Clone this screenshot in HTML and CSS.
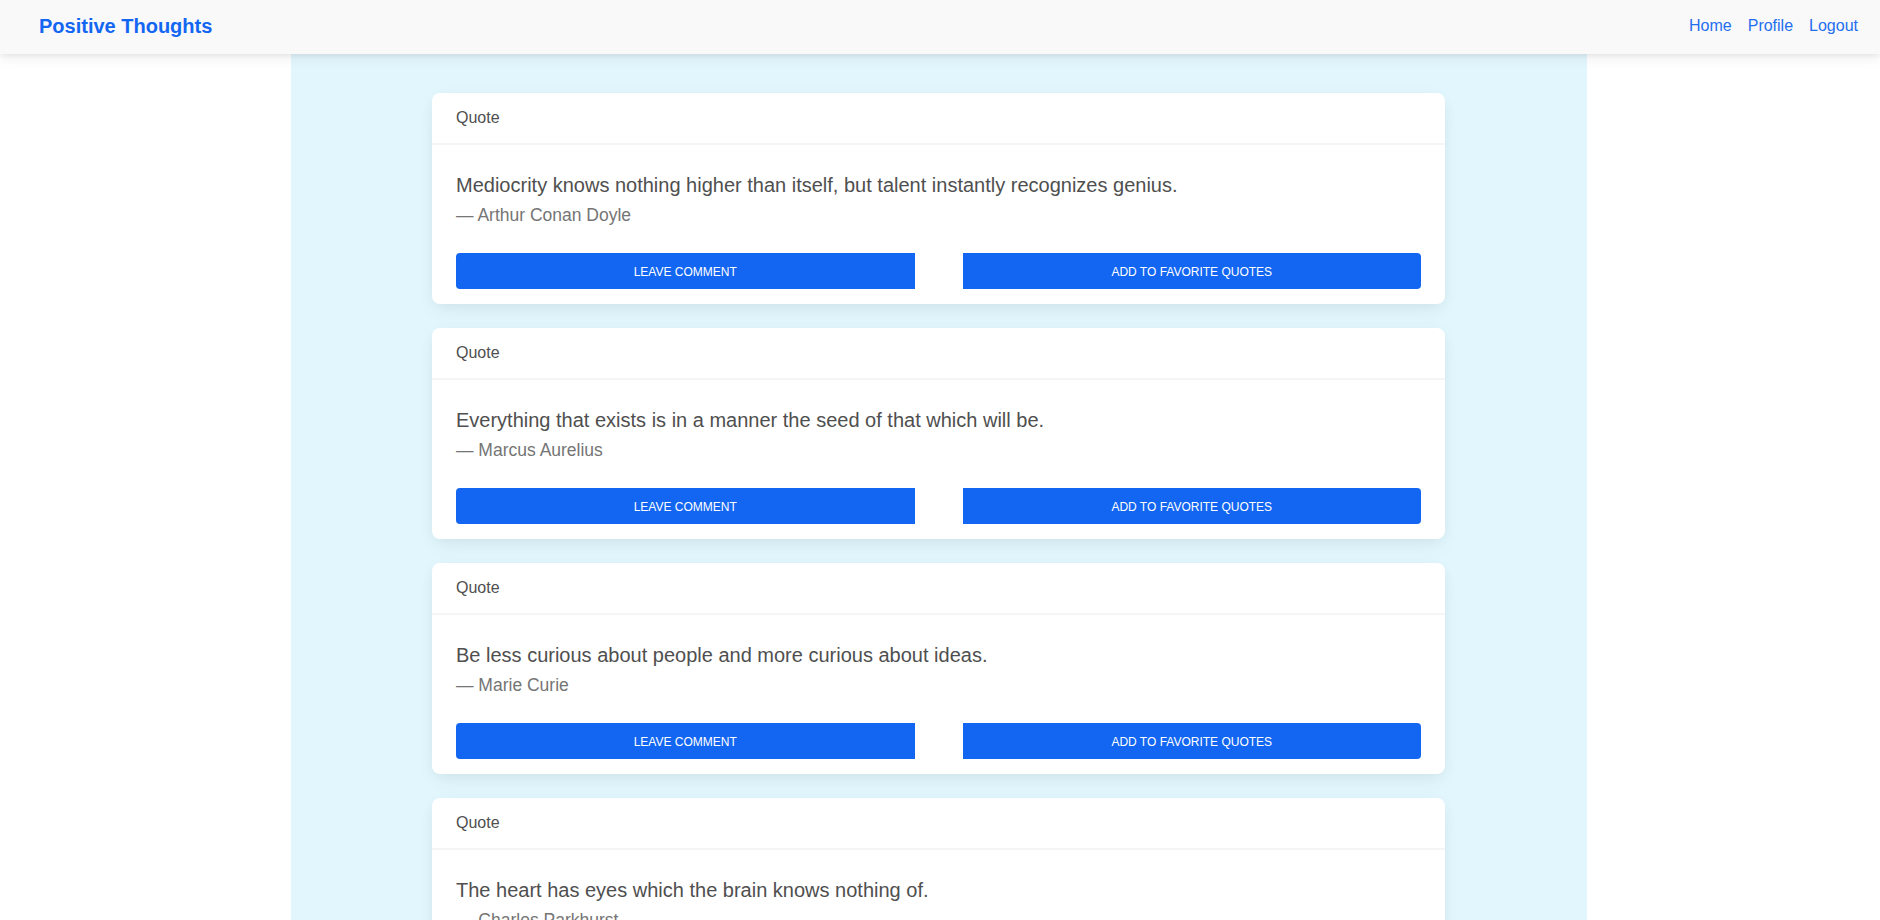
FILE: index.html
```html
<!DOCTYPE html>
<html lang="en">
<head>
<meta charset="utf-8">
<title>Positive Thoughts</title>
<link rel="stylesheet" href="styles.css">
</head>
<body>
<nav class="navbar">
  <a class="brand" href="#">Positive Thoughts</a>
  <ul class="nav-links">
    <li><a href="#">Home</a></li>
    <li><a href="#">Profile</a></li>
    <li><a href="#">Logout</a></li>
  </ul>
</nav>
<main class="page">
  <div class="card">
    <div class="card-header">Quote</div>
    <div class="card-body">
      <figure class="quote">
        <blockquote><p>Mediocrity knows nothing higher than itself, but talent instantly recognizes genius.</p></blockquote>
        <figcaption>— Arthur Conan Doyle</figcaption>
      </figure>
      <div class="actions">
        <button class="btn btn-left">Leave comment</button>
        <button class="btn btn-right">Add to favorite quotes</button>
      </div>
    </div>
  </div>
  <div class="card">
    <div class="card-header">Quote</div>
    <div class="card-body">
      <figure class="quote">
        <blockquote><p>Everything that exists is in a manner the seed of that which will be.</p></blockquote>
        <figcaption>— Marcus Aurelius</figcaption>
      </figure>
      <div class="actions">
        <button class="btn btn-left">Leave comment</button>
        <button class="btn btn-right">Add to favorite quotes</button>
      </div>
    </div>
  </div>
  <div class="card">
    <div class="card-header">Quote</div>
    <div class="card-body">
      <figure class="quote">
        <blockquote><p>Be less curious about people and more curious about ideas.</p></blockquote>
        <figcaption>— Marie Curie</figcaption>
      </figure>
      <div class="actions">
        <button class="btn btn-left">Leave comment</button>
        <button class="btn btn-right">Add to favorite quotes</button>
      </div>
    </div>
  </div>
  <div class="card">
    <div class="card-header">Quote</div>
    <div class="card-body">
      <figure class="quote">
        <blockquote><p>The heart has eyes which the brain knows nothing of.</p></blockquote>
        <figcaption>— Charles Parkhurst</figcaption>
      </figure>
      <div class="actions">
        <button class="btn btn-left">Leave comment</button>
        <button class="btn btn-right">Add to favorite quotes</button>
      </div>
    </div>
  </div>
</main>
</body>
</html>
```

FILE: styles.css
```css
* { box-sizing: border-box; }

html, body {
  margin: 0;
  padding: 0;
}

body {
  font-family: "Liberation Sans", Arial, sans-serif;
  font-size: 16px;
  line-height: 1.6;
  color: #4f4f4f;
  background: #ffffff;
}

a { text-decoration: none; }

.navbar {
  position: relative;
  z-index: 2;
  height: 54px;
  padding: 0 14px 3px 39px;
  display: flex;
  align-items: center;
  justify-content: space-between;
  background: #f9f9f9;
  box-shadow: 0 4px 12px 0 rgba(0, 0, 0, 0.07), 0 2px 4px rgba(0, 0, 0, 0.05);
}

.brand {
  font-size: 20px;
  font-weight: 700;
  line-height: 24px;
  color: #1266f1;
}

.nav-links {
  list-style: none;
  margin: 0;
  padding: 0;
  display: flex;
}

.nav-links a {
  display: block;
  padding: 0 8px;
  font-size: 16px;
  line-height: 24px;
  color: #1f6fee;
}

.page {
  width: 1296px;
  min-height: 866px;
  margin: 0 0 0 291px;
  padding: 39px 0 24px;
  background: #e2f6fd;
}

.card {
  width: 1013px;
  margin: 0 0 24px 141px;
  background: #ffffff;
  border-radius: 8px;
  box-shadow: 0 2px 15px -3px rgba(0, 0, 0, 0.07), 0 10px 20px -2px rgba(0, 0, 0, 0.04);
}

.card-header {
  padding: 12px 24px;
  line-height: 25.6px;
  border-bottom: 2px solid #f5f5f5;
}

.card-body {
  padding: 24px 24px 15.4px;
}

.quote {
  margin: 0 0 24px;
}

.quote blockquote {
  margin: 0;
  font-size: 20px;
  line-height: 32px;
}

.quote blockquote p {
  margin: 0;
}

.quote figcaption {
  font-size: 17.5px;
  line-height: 28px;
  color: #757575;
}

.actions {
  display: grid;
  grid-template-columns: 1fr 1fr;
  column-gap: 48px;
}

.btn {
  display: block;
  width: 100%;
  height: 36px;
  padding: 10px 24px 8px;
  border: 0;
  background: #1266f1;
  color: #ffffff;
  font-family: "Liberation Sans", Arial, sans-serif;
  font-size: 12px;
  font-weight: 500;
  line-height: 18px;
  text-transform: uppercase;
  cursor: pointer;
}

.btn-left { border-radius: 4px 0 0 4px; }
.btn-right { border-radius: 0 4px 4px 0; }
```
